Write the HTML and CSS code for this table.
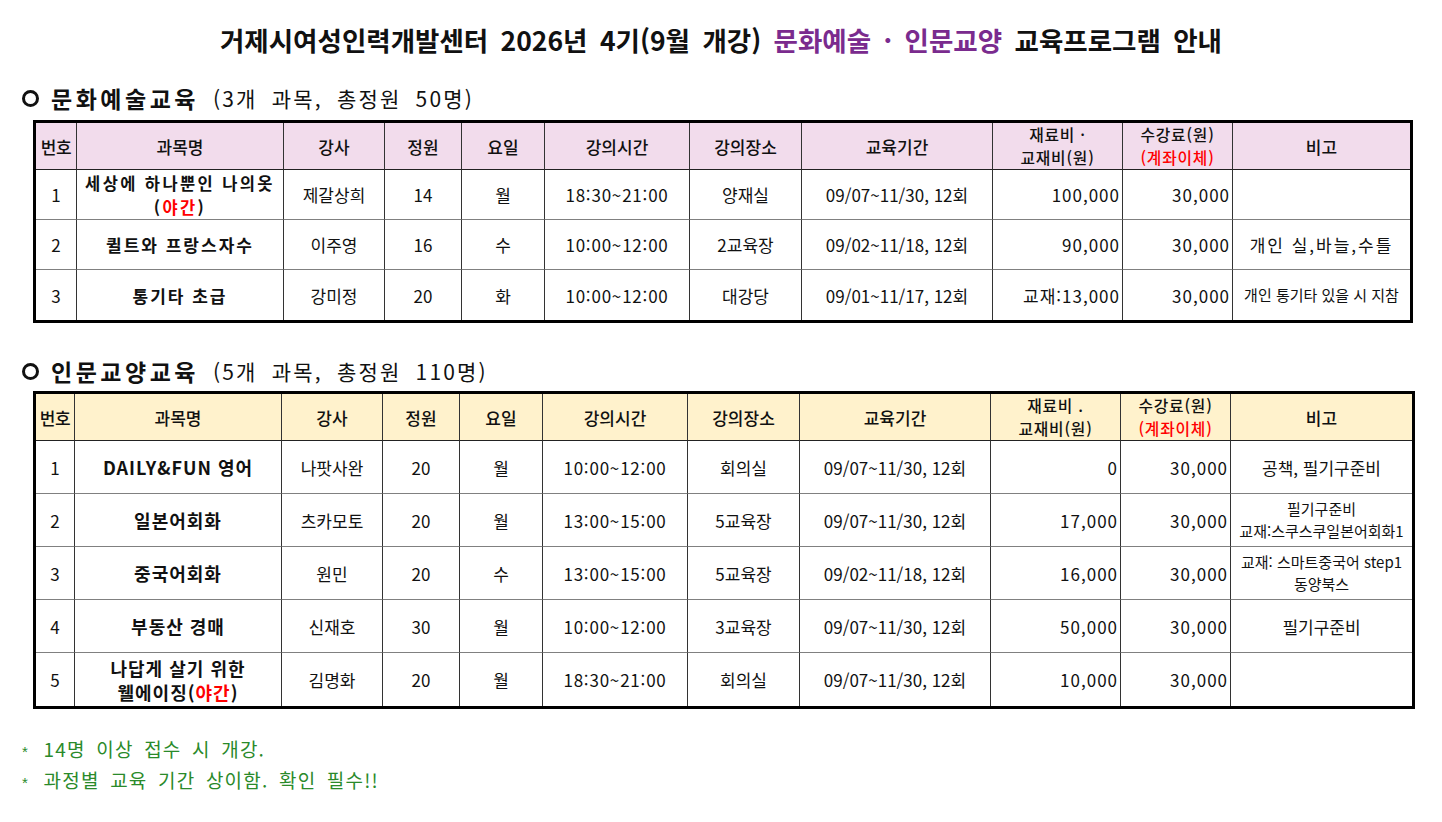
FILE: index.html
```html
<!DOCTYPE html>
<html lang="ko">
<head>
<meta charset="utf-8">
<title>교육프로그램 안내</title>
<link rel="stylesheet" href="styles.css">
</head>
<body>
<div class="page">
  <h1 class="title">거제시여성인력개발센터 2026년 4기(9월 개강) <span class="purple">문화예술 · 인문교양</span> 교육프로그램 안내</h1>

  <h2 class="section first"><span class="ring"></span><b>문화예술교육</b> <span class="sub">(3개 과목, 총정원 50명)</span></h2>
  <table class="grid t1">
    <colgroup>
      <col class="c1"><col class="c2"><col class="c3"><col class="c4"><col class="c5"><col class="c6"><col class="c7"><col class="c8"><col class="c9"><col class="c10"><col class="c11">
    </colgroup>
    <thead>
      <tr class="head pink">
        <th class="tight">번호</th><th>과목명</th><th>강사</th><th>정원</th><th>요일</th><th>강의시간</th><th>강의장소</th><th>교육기간</th><th class="two">재료비 ·<br>교재비(원)</th><th class="two">수강료(원)<br><span class="red">(계좌이체)</span></th><th class="last">비고</th>
      </tr>
    </thead>
    <tbody>
      <tr class="row">
        <td>1</td><td class="name two">세상에 하나뿐인 나의옷<br>(<span class="red">야간</span>)</td><td>제갈상희</td><td>14</td><td>월</td><td class="time">18:30~21:00</td><td>양재실</td><td>09/07~11/30, 12회</td><td class="num">100,000</td><td class="num">30,000</td><td class="last"></td>
      </tr>
      <tr class="row">
        <td>2</td><td class="name">퀼트와 프랑스자수</td><td>이주영</td><td>16</td><td>수</td><td class="time">10:00~12:00</td><td>2교육장</td><td>09/02~11/18, 12회</td><td class="num">90,000</td><td class="num">30,000</td><td class="last wide">개인 실,바늘,수틀</td>
      </tr>
      <tr class="row end">
        <td>3</td><td class="name">통기타 초급</td><td>강미정</td><td>20</td><td>화</td><td class="time">10:00~12:00</td><td>대강당</td><td>09/01~11/17, 12회</td><td class="num">교재:13,000</td><td class="num">30,000</td><td class="last small">개인 통기타 있을 시 지참</td>
      </tr>
    </tbody>
  </table>

  <h2 class="section second"><span class="ring"></span><b>인문교양교육</b> <span class="sub">(5개 과목, 총정원 110명)</span></h2>
  <table class="grid t2">
    <colgroup>
      <col class="c1"><col class="c2"><col class="c3"><col class="c4"><col class="c5"><col class="c6"><col class="c7"><col class="c8"><col class="c9"><col class="c10"><col class="c11">
    </colgroup>
    <thead>
      <tr class="head cream">
        <th class="tight">번호</th><th>과목명</th><th>강사</th><th>정원</th><th>요일</th><th>강의시간</th><th>강의장소</th><th>교육기간</th><th class="two">재료비 .<br>교재비(원)</th><th class="two">수강료(원)<br><span class="red">(계좌이체)</span></th><th class="last">비고</th>
      </tr>
    </thead>
    <tbody>
      <tr class="row">
        <td>1</td><td class="name bold">DAILY&amp;FUN 영어</td><td>나팟사완</td><td>20</td><td>월</td><td class="time">10:00~12:00</td><td>회의실</td><td>09/07~11/30, 12회</td><td class="num">0</td><td class="num">30,000</td><td class="last">공책, 필기구준비</td>
      </tr>
      <tr class="row">
        <td>2</td><td class="name bold">일본어회화</td><td>츠카모토</td><td>20</td><td>월</td><td class="time">13:00~15:00</td><td>5교육장</td><td>09/07~11/30, 12회</td><td class="num">17,000</td><td class="num">30,000</td><td class="last small two">필기구준비<br>교재:스쿠스쿠일본어회화1</td>
      </tr>
      <tr class="row">
        <td>3</td><td class="name bold">중국어회화</td><td>원민</td><td>20</td><td>수</td><td class="time">13:00~15:00</td><td>5교육장</td><td>09/02~11/18, 12회</td><td class="num">16,000</td><td class="num">30,000</td><td class="last small two">교재: 스마트중국어 step1<br>동양북스</td>
      </tr>
      <tr class="row">
        <td>4</td><td class="name bold">부동산 경매</td><td>신재호</td><td>30</td><td>월</td><td class="time">10:00~12:00</td><td>3교육장</td><td>09/07~11/30, 12회</td><td class="num">50,000</td><td class="num">30,000</td><td class="last">필기구준비</td>
      </tr>
      <tr class="row end">
        <td>5</td><td class="name bold two">나답게 살기 위한<br>웰에이징(<span class="red">야간</span>)</td><td>김명화</td><td>20</td><td>월</td><td class="time">18:30~21:00</td><td>회의실</td><td>09/07~11/30, 12회</td><td class="num">10,000</td><td class="num">30,000</td><td class="last"></td>
      </tr>
    </tbody>
  </table>

  <div class="notes">
    <p class="note"><span class="star">*</span> 14명 이상 접수 시 개강.</p>
    <p class="note"><span class="star">*</span> 과정별 교육 기간 상이함. 확인 필수!!</p>
  </div>
</div>
</body>
</html>
```

FILE: styles.css
```css
html, body {
  margin: 0;
  padding: 0;
  background: #ffffff;
}

body {
  font-family: "Noto Sans CJK KR", "Noto Sans", sans-serif;
  color: #111;
}

.page {
  width: 1442px;
  padding-top: 22px;
}

.title {
  margin: 0;
  text-align: center;
  font-size: 26.5px;
  line-height: 36px;
  font-weight: 700;
  word-spacing: 5px;
  color: #111;
}

.purple {
  color: #7a2b8e;
}

.section {
  display: flex;
  align-items: center;
  margin: 0 0 0 22px;
  height: 28px;
  font-size: 21px;
  font-weight: 400;
}

.section.first {
  margin-top: 26px;
  margin-bottom: 8px;
}

.section.second {
  margin-top: 34px;
  margin-bottom: 6px;
}

.section b {
  font-size: 23px;
  font-weight: 700;
  letter-spacing: 3.5px;
  margin-right: 14px;
}

.section .sub {
  word-spacing: 6px;
  letter-spacing: 2.2px;
}

.ring {
  display: inline-block;
  flex-shrink: 0;
  box-sizing: border-box;
  width: 17px;
  height: 17px;
  border: 3.5px solid #111;
  border-radius: 50%;
  margin-right: 12px;
}

.grid {
  margin-left: 33px;
  border: 3px solid #000;
  border-spacing: 0;
  border-collapse: separate;
  table-layout: fixed;
  font-size: 17px;
}

.t1 { width: 1380px; }
.t2 { width: 1382px; }

.c1 { width: 41px; }
.c2 { width: 207px; }
.c3 { width: 101px; }
.c4 { width: 77px; }
.c5 { width: 83px; }
.c6 { width: 145px; }
.c7 { width: 112px; }
.c8 { width: 191px; }
.c9 { width: 130px; }
.c10 { width: 110px; }
.c11 { width: 177px; }
.t2 .c1 { width: 39px; }
.t2 .c11 { width: 181px; }

.grid th,
.grid td {
  padding: 0 2px;
  text-align: center;
  vertical-align: middle;
  border-right: 1px solid #333;
  border-bottom: 1px solid #808080;
  line-height: 21px;
  white-space: nowrap;
  overflow: hidden;
}

.grid th {
  font-weight: 500;
  border-bottom-color: #222;
}

.grid th.two {
  font-size: 15.8px;
  line-height: 23px;
  letter-spacing: 0.8px;
}

.grid th.tight {
  padding: 0;
  letter-spacing: -0.5px;
}

.grid .last {
  border-right: none;
}

.grid tr.end td {
  border-bottom: none;
}

.pink th { background: #f2dcec; }
.cream th { background: #fff2cc; }

.t1 .head { height: 47px; }
.t1 .row { height: 50px; }
.t2 .head { height: 46px; }
.t2 .row { height: 53px; }

.red {
  color: #ff0000;
}

.grid td.name {
  font-weight: 600;
  letter-spacing: 2px;
}

.grid td.name.two {
  font-size: 16.5px;
  line-height: 24px;
  letter-spacing: 2.4px;
}

.grid td.name.bold {
  font-weight: 700;
  font-size: 18px;
  letter-spacing: 1px;
}

.grid td.name.bold.two {
  line-height: 24px;
}

.grid td.num {
  text-align: right;
  padding-right: 2px;
  letter-spacing: 1px;
}

.grid td.time {
  letter-spacing: 0.8px;
}

.grid td.small {
  font-size: 15px;
  letter-spacing: 0;
  line-height: 22px;
  padding: 0 1px;
}

.grid td.wide {
  letter-spacing: 2px;
}

.notes {
  margin-top: 24px;
  margin-left: 22px;
}

.note {
  margin: 0;
  height: 31px;
  line-height: 31px;
  font-size: 19px;
  color: #2a8a2a;
  letter-spacing: 1.2px;
  word-spacing: 4px;
}

.star {
  font-family: "Liberation Sans", sans-serif;
  font-size: 15px;
  margin-right: 4px;
}
```
